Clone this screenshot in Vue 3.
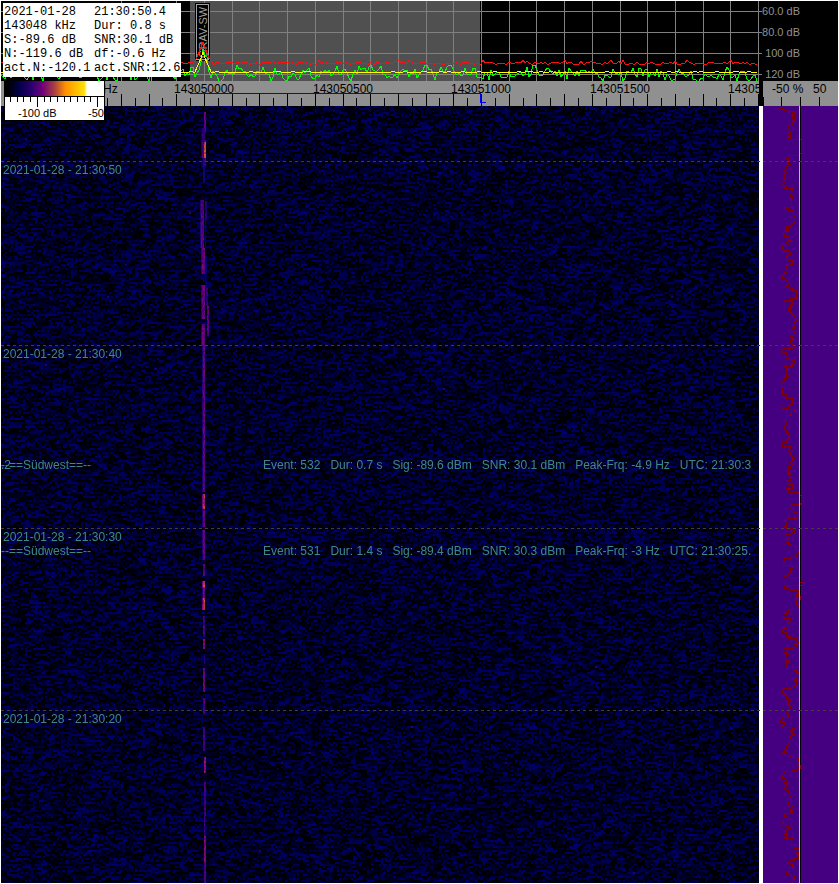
<script setup>
import { ref, onMounted, onBeforeUnmount } from 'vue'

const info = [
  ['2021-01-28', '21:30:50.4'],
  ['143048 kHz', 'Dur: 0.8 s'],
  ['S:-89.6 dB', 'SNR:30.1 dB'],
  ['N:-119.6 dB', 'df:-0.6 Hz'],
  ['act.N:-120.1', 'act.SNR:12.6'],
]
const dbScale = ['60.0 dB', '80.0 dB', '100 dB', '120 dB']

// Frequency axis: 100 Hz per major division
const FREQ_ORIGIN = 203
const HZ_STEP = 27.7
const majors = Array.from({ length: 70 }, (_, i) => Math.round(FREQ_ORIGIN + (i - 7) * HZ_STEP)).filter((x) => x > 100)
const minors = Array.from({ length: 70 }, (_, i) => Math.round(FREQ_ORIGIN + (i - 6.5) * HZ_STEP)).filter((x) => x > 100)
const freqLabels = Array.from({ length: 10 }, (_, i) => ({
  x: Math.round(FREQ_ORIGIN + i * 5 * HZ_STEP),
  text: String(143050000 + i * 500),
}))
const gridRows = [10, 31, 52, 73]
const legendTicks = Array.from({ length: 15 }, (_, i) => ({
  x: Math.round(5 + i * 6.7),
  y: i === 4 || i === 13 ? 9 : 4,
}))

const stamps = [
  { y: 55, text: '2021-01-28 - 21:30:50' },
  { y: 239, text: '2021-01-28 - 21:30:40' },
  { y: 422, text: '2021-01-28 - 21:30:30' },
  { y: 604, text: '2021-01-28 - 21:30:20' },
]
const events = [
  {
    y: 352,
    wrap: '.2',
    parts: ['Event: 532', 'Dur: 0.7 s', 'Sig: -89.6 dBm', 'SNR: 30.1 dBm', 'Peak-Frq: -4.9 Hz', 'UTC: 21:30:3'],
  },
  {
    y: 438,
    wrap: '',
    parts: ['Event: 531', 'Dur: 1.4 s', 'Sig: -89.4 dBm', 'SNR: 30.3 dBm', 'Peak-Frq: -3 Hz', 'UTC: 21:30:25.'],
  },
]

function rng(seed) {
  let s = seed >>> 0
  return () => {
    s = (s + 0x6d2b79f5) >>> 0
    let t = Math.imul(s ^ (s >>> 15), 1 | s)
    t = (t + Math.imul(t ^ (t >>> 7), 61 | t)) ^ t
    return ((t ^ (t >>> 14)) >>> 0) / 4294967296
  }
}

function peak(x, height, spread) {
  const d = Math.abs(x - 202)
  return d < spread ? height * (1 - d / spread) : 0
}
const toPoints = (list) => list.map((p) => p.join(',')).join(' ')

function trace(seed, step, fn) {
  const r = rng(seed)
  const out = []
  for (let x = 0; x <= 756; x += step) out.push([x, Math.round(fn(x, r))])
  return toPoints(out)
}
let swell = 0
const greenLine = trace(11, 2, (x, r) => {
  swell = swell * 0.65 + (r() - 0.5) * 9
  return Math.min(80, Math.max(64, 74 + swell + (r() - 0.5) * 9)) - peak(x, 22, 8)
})
const yellowLine = trace(5, 2, (x, r) => 71 - (r() > 0.86 ? 1 : 0) - peak(x, 19, 8))
const redLine = trace(8, 2, (x, r) => 62 + (r() - 0.5) * 3 - (r() > 0.93 ? 2 : 0) - peak(x, 20, 9))

// Deviation trace as [y, x] turning points
const turns = [
  [0, 18], [5, 31], [12, 32], [19, 25], [26, 27], [32, 24], [33, 40], [46, 40], [47, 36], [49, 26], [59, 24],
  [64, 21], [71, 22], [81, 20], [82, 29], [94, 28], [101, 22], [104, 30], [116, 31], [120, 23], [129, 20],
  [130, 25], [139, 19], [144, 26], [149, 24], [154, 30], [159, 23], [166, 20], [174, 24], [180, 26], [184, 33],
  [194, 21], [195, 29], [199, 27], [209, 30], [219, 31], [229, 27], [239, 31], [242, 20], [249, 22], [253, 31],
  [260, 21], [269, 23], [274, 20], [282, 19], [292, 29], [302, 19], [303, 31], [309, 22], [319, 21], [329, 26],
  [336, 19], [340, 27], [349, 29], [359, 25], [369, 26], [379, 29], [382, 23], [386, 36], [389, 40], [397, 37],
  [398, 28], [406, 34], [412, 24], [420, 20], [422, 31], [428, 22], [439, 34], [447, 33], [452, 21], [459, 30],
  [469, 20], [471, 36], [476, 40], [479, 21], [484, 35], [494, 33], [499, 35], [503, 25], [508, 20], [512, 27],
  [522, 20], [529, 23], [532, 33], [539, 33], [542, 21], [546, 24], [559, 23], [561, 34], [569, 32], [579, 30],
  [582, 20], [592, 25], [604, 25], [611, 19], [620, 20], [621, 29], [632, 27], [639, 23], [646, 19], [649, 27],
  [651, 35], [662, 34], [665, 20], [674, 23], [684, 25], [694, 24], [699, 29], [706, 27], [707, 22], [716, 19],
  [720, 25], [727, 21], [732, 29], [739, 32], [747, 35], [754, 27], [766, 23], [769, 31], [777, 26],
]
const deviation = (() => {
  const r = rng(77)
  let d = `M${turns[0][1]} ${turns[0][0]}`
  for (let i = 1; i < turns.length; i++) {
    const [y0, x0] = turns[i - 1]
    const [y1, x1] = turns[i]
    for (let y = y0 + 1; y < y1; y += 1) {
      if (x0 < 36 && r() > 0.4) {
        d += ` V${y} H${Math.round(x0 + ((x1 - x0) * (y - y0) * 0.4) / (y1 - y0) + (r() - 0.5) * 5)}`
      }
    }
    d += ` V${y1} H${x1}`
  }
  return d
})()

// Carrier echoes: [top, bottom, left, width, strength 0..1]
const echoes = [
  [6, 25, 203, 2, 0.5], [22, 36, 200, 4, 0.36], [34, 52, 200, 5, 0.42], [36, 51, 203, 2, 1], [52, 60, 201, 4, 0.4],
  [60, 75, 202, 2, 0.28], [95, 112, 204, 2, 0.3], [94, 142, 199, 4, 0.46], [142, 168, 200, 4, 0.52],
  [112, 142, 204, 1, 0.25], [179, 212, 200, 4, 0.5], [150, 182, 204, 2, 0.2], [182, 200, 205, 2, 0.34],
  [200, 230, 206, 2, 0.46], [218, 240, 200, 4, 0.5], [240, 340, 201, 3, 0.48], [340, 385, 201, 3, 0.46],
  [388, 403, 201, 3, 0.82], [403, 420, 201, 3, 0.5], [424, 454, 201, 3, 0.5], [458, 470, 202, 2, 0.42],
  [475, 482, 201, 3, 0.9], [482, 492, 201, 3, 0.5], [492, 504, 201, 3, 0.86], [510, 530, 202, 2, 0.4],
  [533, 543, 202, 2, 0.6], [548, 558, 203, 1, 0.3], [562, 585, 202, 2, 0.52], [592, 607, 202, 2, 0.42],
  [621, 645, 202, 2, 0.4], [651, 666, 203, 2, 0.66], [676, 710, 203, 2, 0.38], [710, 730, 203, 1, 0.36],
  [730, 755, 203, 2, 0.58], [755, 777, 203, 2, 0.44],
]
const palette = [
  [0, [0, 0, 0]], [0.2, [0, 0, 110]], [0.5, [106, 0, 122]], [0.75, [160, 30, 90]], [1, [215, 85, 45]],
]
function heat(v) {
  const c = Math.min(1, Math.max(0, v))
  for (let i = 1; i < palette.length; i++) {
    const [p1, b] = palette[i]
    const [p0, a] = palette[i - 1]
    if (c <= p1) return a.map((n, k) => n + ((b[k] - n) * (c - p0)) / (p1 - p0))
  }
  return palette[palette.length - 1][1]
}

const fall = ref(null)
const canvas = ref(null)

function paint() {
  const w = fall.value.clientWidth
  const h = fall.value.clientHeight
  const el = canvas.value
  el.width = w
  el.height = h
  const ctx = el.getContext('2d')
  const img = ctx.createImageData(w, h)
  const r = rng(2021)
  const cols = Math.ceil(w / 2) + 2
  for (let y = 0; y < h; y += 2) {
    const row = []
    let prev = r()
    for (let c = 0; c < cols; c++) {
      const n = r()
      if (r() > 0.35) prev = n
      row.push(0.2 * Math.pow(prev, 1.7) + (r() > 0.9995 ? 0.15 : 0))
    }
    for (let dy = 0; dy < 2 && y + dy < h; dy++) {
      for (let x = 0; x < w; x++) {
        const shade = heat(row[x >> 1] * (dy ? 0.9 : 1))
        const o = ((y + dy) * w + x) * 4
        img.data[o] = shade[0]
        img.data[o + 1] = shade[1]
        img.data[o + 2] = shade[2]
        img.data[o + 3] = 255
      }
    }
  }
  ctx.putImageData(img, 0, 0)
  for (const [top, bottom, left, width, level] of echoes) {
    for (let y = top; y < bottom; y += 2) {
      for (let x = 0; x < width; x++) {
        const edge = width > 2 && x === 0 ? 0.65 : 1
        const [cr, cg, cb] = heat(level * edge * (0.75 + r() * 0.4))
        ctx.fillStyle = `rgb(${cr | 0},${cg | 0},${cb | 0})`
        ctx.fillRect(left + x, y, 1, 2)
      }
    }
  }
}

onMounted(() => {
  paint()
  window.addEventListener('resize', paint)
})
onBeforeUnmount(() => window.removeEventListener('resize', paint))
</script>

<template>
  <main class="analyzer">
    <section class="spectrum">
      <svg class="plot" aria-hidden="true">
        <rect x="189" y="0" width="290" height="80" fill="#505050" />
        <g stroke="#808080" shape-rendering="crispEdges">
          <line v-for="y in gridRows" :key="'h' + y" x1="0" x2="100%" :y1="y + 0.5" :y2="y + 0.5" />
          <line v-for="x in majors" :key="'v' + x" :x1="x + 0.5" :x2="x + 0.5" y1="0" y2="80" />
        </g>
        <rect x="194" y="2" width="15" height="58" fill="#000" />
        <rect x="195" y="3" width="13" height="56" fill="#a0a0a0" />
        <rect x="196" y="4" width="11" height="54" fill="#000" />
        <text class="marker" transform="translate(206 57) rotate(-90)">GRAV-SW</text>
        <g fill="none" shape-rendering="crispEdges">
          <polyline :points="greenLine" stroke="#00ff00" />
          <polyline :points="redLine" stroke="#ff1010" />
          <polyline :points="yellowLine" stroke="#ffff00" />
        </g>
      </svg>
      <ul class="db-scale">
        <li v-for="label in dbScale" :key="label">{{ label }}</li>
      </ul>
      <dl class="info">
        <div v-for="row in info" :key="row[0]" class="info-row">
          <dt>{{ row[0] }}</dt>
          <dd>{{ row[1] }}</dd>
        </div>
      </dl>
    </section>

    <section class="rulers">
      <svg class="ruler" aria-hidden="true">
        <g stroke="#000" shape-rendering="crispEdges">
          <line v-for="x in majors" :key="'a' + x" :x1="x + 0.5" :x2="x + 0.5" y1="13" y2="25" />
          <line v-for="x in minors" :key="'b' + x" :x1="x + 0.5" :x2="x + 0.5" y1="17" y2="25" />
        </g>
        <text x="102" y="12">Hz</text>
        <text v-for="f in freqLabels" :key="f.text" :x="f.x" y="12" text-anchor="middle">{{ f.text }}</text>
        <g fill="#0000ff">
          <rect x="189" y="12" width="291" height="1" />
          <rect x="479" y="12" width="1" height="10" />
          <rect x="479" y="21" width="6" height="1" />
        </g>
      </svg>
      <svg class="side-ruler" aria-hidden="true">
        <path d="M0.5 16V25M18.5 16V25M37.5 16V25M56.5 16V25" stroke="#000" />
        <text x="9" y="12">-50 %</text>
        <text x="50" y="12">50</text>
      </svg>
      <div class="legend">
        <div class="ramp"></div>
        <svg class="legend-ticks" aria-hidden="true">
          <line v-for="t in legendTicks" :key="t.x" :x1="t.x + 0.5" :x2="t.x + 0.5" y1="0" :y2="t.y + 1" stroke="#000" />
        </svg>
        <div class="legend-labels"><span>-100 dB</span><span>-50</span></div>
      </div>
    </section>

    <section class="history">
      <div ref="fall" class="waterfall">
        <canvas ref="canvas" class="noise"></canvas>
        <time v-for="s in stamps" :key="s.y" class="stamp" :style="{ top: s.y + 2 + 'px' }">{{ s.text }}</time>
        <div v-for="e in events" :key="e.y" class="event" :style="{ top: e.y + 'px' }">
          <span class="wrap">{{ e.wrap }}</span>
          <span class="station">--==Südwest==--</span>
          <p class="event-text">
            <span v-for="p in e.parts" :key="p">{{ p }}</span>
          </p>
        </div>
      </div>
      <div class="deviation">
        <svg class="deviation-plot" aria-hidden="true">
          <rect x="37" y="0" width="1" height="100%" fill="#000" />
          <path :d="deviation" fill="none" stroke="#800008" shape-rendering="crispEdges" />
          <rect x="36" y="0" width="1" height="100%" fill="#48f890" />
        </svg>
      </div>
      <svg class="time-lines" aria-hidden="true">
        <line v-for="s in stamps" :key="s.y" x1="0" x2="100%" :y1="s.y + 0.5" :y2="s.y + 0.5" />
      </svg>
    </section>
  </main>
</template>

<style>
body {
  margin: 0;
  background: #fff;
}
</style>

<style scoped>
.analyzer {
  display: flex;
  flex-direction: column;
  box-sizing: border-box;
  min-height: 100vh;
  padding: 1px;
  background: #fff;
  font-family: "Liberation Sans", Arial, sans-serif;
  font-size: 12px;
}
.spectrum {
  position: relative;
  display: flex;
  height: 80px;
  background: #000;
  overflow: hidden;
}
.plot {
  flex: 1;
  min-width: 0;
  height: 80px;
}
.marker {
  font-size: 11px;
  fill: #a0a0a0;
}
.db-scale {
  width: 79px;
  margin: 0;
  padding: 0;
  list-style: none;
  font-size: 11px;
  line-height: 20px;
  color: #909090;
  white-space: nowrap;
}
.db-scale li {
  display: flex;
  justify-content: space-between;
  height: 21px;
  width: 41px;
}
.db-scale li::before {
  content: "";
  width: 3px;
  height: 1px;
  margin-top: 10px;
  background: #808080;
}
.info {
  position: absolute;
  left: 2px;
  top: 2px;
  margin: 0;
  padding: 2px 1px;
  background: #fff;
  color: #000;
  font: 12px/14px "Liberation Mono", "Courier New", monospace;
}
.info-row {
  display: grid;
  grid-template-columns: 90px 86px;
  white-space: nowrap;
}
.info dd {
  margin: 0;
}
.rulers {
  position: relative;
  display: flex;
  gap: 4px;
  height: 25px;
  background: #000;
}
.ruler {
  flex: 1;
  min-width: 0;
  height: 25px;
  background: #909090;
}
.side-ruler {
  width: 75px;
  height: 25px;
  background: #909090;
}
.legend {
  position: absolute;
  z-index: 1;
  left: 3px;
  top: 0;
  width: 99px;
  border: 1px solid #000;
  border-top: 0;
  background: #fff;
}
.ramp {
  height: 15px;
  background: linear-gradient(90deg, #000 3%, #000048 14%, #300070 28%, #700078 38%, #a84040 50%, #ff9000 61%, #ffe000 80%, #fff 83%);
}
.legend-ticks {
  display: block;
  width: 100%;
  height: 10px;
  border-top: 1px solid #000;
  shape-rendering: crispEdges;
}
.legend-labels {
  display: flex;
  justify-content: space-between;
  padding-left: 13px;
  font-size: 11px;
  line-height: 13px;
}
.history {
  position: relative;
  display: flex;
  flex: 1;
  gap: 4px;
  min-height: 777px;
}
.waterfall {
  position: relative;
  flex: 1;
  min-width: 0;
  overflow: hidden;
  background: #000;
  color: #408888;
}
.noise {
  position: absolute;
  inset: 0;
}
.stamp {
  position: absolute;
  left: 2px;
  line-height: 14px;
}
.event {
  position: absolute;
  left: 0;
  right: 0;
  display: flex;
  line-height: 14px;
  white-space: nowrap;
}
.wrap {
  width: 0;
}
.station {
  width: 262px;
}
.event-text {
  display: flex;
  gap: 10px;
  margin: 0;
}
.deviation {
  width: 75px;
  background: #440080;
}
.deviation-plot {
  display: block;
  width: 75px;
  height: 100%;
}
.time-lines {
  position: absolute;
  inset: 0;
  width: 100%;
  height: 100%;
  stroke: #404038;
  stroke-dasharray: 3 3;
}
</style>
